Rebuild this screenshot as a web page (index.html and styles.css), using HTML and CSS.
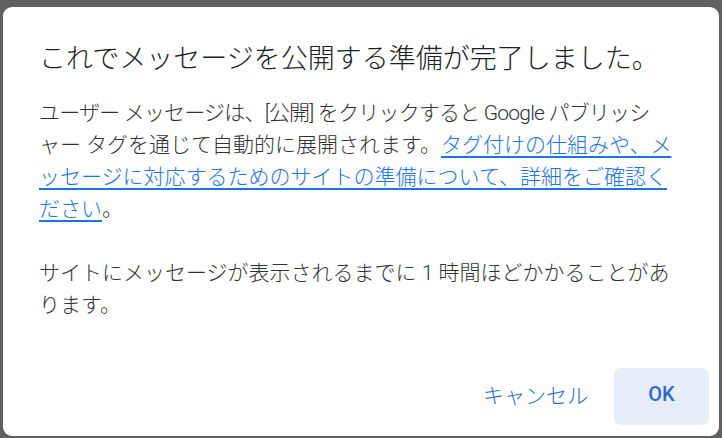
FILE: index.html
```html
<!DOCTYPE html>
<html lang="ja">
<head>
<meta charset="utf-8">
<link rel="stylesheet" href="styles.css">
</head>
<body>
<div class="dialog">
  <h1 class="title">これでメッセージを公開する準備が完了しました。</h1>
  <p class="text"><span class="tight">ユーザー メッセージは、[公開] をクリックすると Google パブリッシ</span><br>ャー タグを通じて自動的に展開されます。<a class="link" href="#">タグ付けの仕組みや、メ<br>ッセージに対応するためのサイトの準備について、詳細をご確認く<br>ださい</a>。</p>
  <p class="text">サイトにメッセージが表示されるまでに 1 時間ほどかかることがあ<br>ります。</p>
  <div class="actions">
    <button class="btn btn-text">キャンセル</button>
    <button class="btn btn-tonal">OK</button>
  </div>
</div>
</body>
</html>
```

FILE: styles.css
```css
html, body {
  margin: 0;
  padding: 0;
}
body {
  background: #5f6062;
  width: 722px;
  height: 438px;
  overflow: hidden;
  padding: 7px 0 0 3px;
  box-sizing: border-box;
  font-family: Roboto, "Noto Sans CJK JP", sans-serif;
}
.dialog {
  width: 716px;
  height: 429px;
  box-sizing: border-box;
  background: #fff;
  border-radius: 9px;
  padding: 34px 10px 11px 36px;
  display: flex;
  flex-direction: column;
}
.title {
  margin: 0 0 20px 0;
  font-size: 27px;
  line-height: 36px;
  font-weight: 300;
  letter-spacing: 0;
  color: #202124;
  white-space: nowrap;
}
.text {
  margin: 0 0 32px 0;
  font-size: 21px;
  line-height: 32px;
  font-weight: 300;
  color: #303336;
  white-space: nowrap;
}
.text:last-of-type {
  margin-bottom: 0;
}
.tight {
  letter-spacing: -0.8px;
}
.link {
  color: #1a73e8;
  text-decoration: underline;
  text-decoration-thickness: 2px;
  text-underline-offset: 4px;
}
.actions {
  margin-top: auto;
  display: flex;
  justify-content: flex-end;
  align-items: center;
  gap: 8px;
}
.btn {
  font-family: Roboto, "Noto Sans CJK JP", sans-serif;
  border: none;
  background: transparent;
  height: 57px;
  border-radius: 7px;
  cursor: pointer;
  color: #2a6ad8;
  padding-bottom: 6px;
}
.btn-text {
  font-size: 21px;
  font-weight: 300;
  padding-left: 18px;
  padding-right: 18px;
}
.btn-tonal {
  background: #e7edf9;
  min-width: 95px;
  font-size: 20px;
  font-weight: 500;
  padding-left: 24px;
  padding-right: 24px;
}
```
